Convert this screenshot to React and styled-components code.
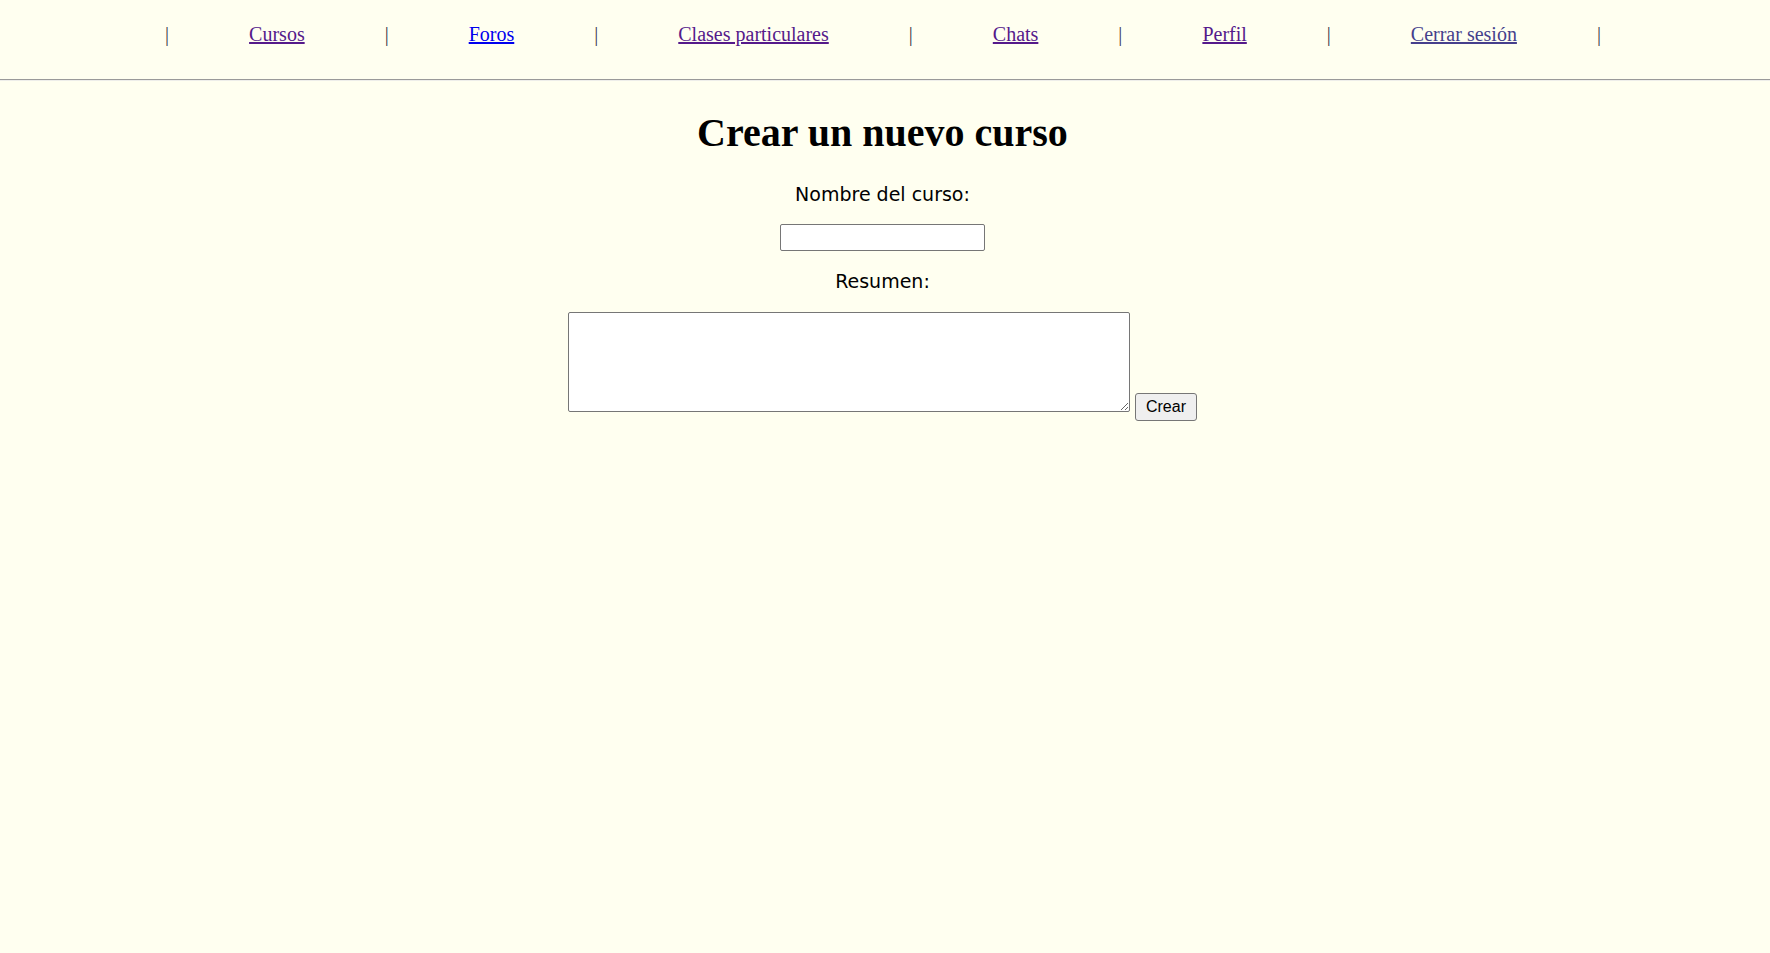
import React from "react";
import styled, { createGlobalStyle } from "styled-components";

const GlobalStyle = createGlobalStyle`
  html, body {
    margin: 0;
    padding: 0;
    background: #fffff0;
  }

  body {
    font-family: "Liberation Serif", "Times New Roman", serif;
    color: #000;
  }
`;

const Header = styled.header`
  border-bottom: 1px solid #9a9a9a;
  box-shadow: 0 1px 0 #eeeeea;
`;

const Nav = styled.nav`
  display: flex;
  justify-content: center;
  align-items: center;
  column-gap: 80px;
  padding: 23px 4px 33px 0;
  font-size: 20px;
  line-height: 23px;
`;

const Separator = styled.span`
  color: #3a3a4a;
`;

const NavLink = styled.a`
  color: ${(props) => props.color};
  text-decoration: underline;
`;

const Main = styled.main`
  display: flex;
  flex-direction: column;
  align-items: center;
  padding-right: 5px;
`;

const Title = styled.h1`
  margin: 30px 0 27px;
  font-size: 40px;
  font-weight: bold;
  line-height: 46px;
`;

const Form = styled.form`
  display: flex;
  flex-direction: column;
  align-items: center;
  row-gap: 19px;
`;

const Label = styled.label`
  font-family: "DejaVu Sans", Verdana, sans-serif;
  font-size: 19px;
  line-height: 22px;
`;

const TextInput = styled.input`
  box-sizing: border-box;
  width: 205px;
  height: 27px;
  padding: 1px 2px;
  border: 1px solid #767676;
  border-radius: 2px;
  background: #fff;
  font-family: "Liberation Sans", Arial, sans-serif;
  font-size: 13.33px;
`;

const SummaryRow = styled.div`
  display: flex;
  align-items: flex-end;
  column-gap: 5px;
  margin-top: 1px;
`;

const TextArea = styled.textarea`
  box-sizing: border-box;
  width: 562px;
  height: 100px;
  margin-bottom: 9px;
  padding: 2px;
  border: 1px solid #767676;
  border-radius: 2px;
  background: #fff;
  font-family: "Liberation Mono", monospace;
  font-size: 13.33px;
`;

const Button = styled.button`
  box-sizing: border-box;
  width: 62px;
  height: 28px;
  padding: 3px 9px;
  border: 1px solid #767676;
  border-radius: 3px;
  background: #efefef;
  color: #000;
  font-family: "Liberation Sans", Arial, sans-serif;
  font-size: 16px;
  line-height: 18px;
`;

const links = [
  { label: "Cursos", color: "#551a8b" },
  { label: "Foros", color: "#0000ee" },
  { label: "Clases particulares", color: "#551a8b" },
  { label: "Chats", color: "#551a8b" },
  { label: "Perfil", color: "#551a8b" },
  { label: "Cerrar sesión", color: "#463f8c" },
];

const App = () => {
  return (
    <>
      <GlobalStyle />
      <Header>
        <Nav>
          <Separator>|</Separator>
          {links.map((link) => (
            <React.Fragment key={link.label}>
              <NavLink href="#" color={link.color}>
                {link.label}
              </NavLink>
              <Separator>|</Separator>
            </React.Fragment>
          ))}
        </Nav>
      </Header>
      <Main>
        <Title>Crear un nuevo curso</Title>
        <Form onSubmit={(e) => e.preventDefault()}>
          <Label htmlFor="nombre">Nombre del curso:</Label>
          <TextInput id="nombre" type="text" />
          <Label htmlFor="resumen">Resumen:</Label>
          <SummaryRow>
            <TextArea id="resumen" />
            <Button type="submit">Crear</Button>
          </SummaryRow>
        </Form>
      </Main>
    </>
  );
};

export default App;
